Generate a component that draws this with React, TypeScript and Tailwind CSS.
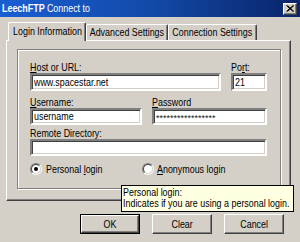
import React from 'react'

const sunken = "border-2 border-t-[#808080] border-l-[#808080] border-r-white border-b-white shadow-[inset_1px_1px_0_#404040,inset_-1px_-1px_0_#d4d0c8] bg-white"

// narrow text, like the old MS Sans Serif face
const T: React.FC<{ children: React.ReactNode; center?: boolean; className?: string }> = ({ children, center, className }) => (
    <span className={`inline-block whitespace-nowrap scale-x-[0.81] ${center ? "origin-center" : "origin-left"} ${className ?? ""}`}>{children}</span>
)

const Field: React.FC<{ value?: string; className?: string; small?: boolean }> = ({ value, className, small }) => (
    <div className={`${sunken} h-[17px] flex items-center pl-[2px] leading-none overflow-hidden ${className ?? ""}`}>
        {small ? <span className="text-[9px] mt-[3px] text-[#202020] whitespace-nowrap">{value}</span> : value ? <T>{value}</T> : null}
    </div>
)

const Label: React.FC<{ children: React.ReactNode; className?: string }> = ({ children, className }) => (
    <div className={`h-[12px] leading-[12px] whitespace-nowrap ${className ?? ""}`}><T>{children}</T></div>
)

const Radio: React.FC<{ checked?: boolean }> = ({ checked }) => (
    <div className="w-[12px] h-[12px] shrink-0 rounded-full border border-t-[#808080] border-l-[#808080] border-r-white border-b-white">
        <div className="w-full h-full rounded-full bg-white border border-t-[#404040] border-l-[#404040] border-r-[#d4d0c8] border-b-[#d4d0c8] flex items-center justify-center">
            {checked ? <div className="w-[4px] h-[4px] rounded-full bg-black" /> : null}
        </div>
    </div>
)

const Tab: React.FC<{ selected?: boolean; children: React.ReactNode; w: string }> = ({ selected, children, w }) => (
    <div
        className={
            selected
                ? `${w} h-[19px] -mb-px relative z-10 bg-[#d4d0c8] border-l border-t border-white border-r border-r-[#404040] shadow-[inset_-1px_0_0_#808080] rounded-tl-[2px] rounded-tr-[2px] flex items-center justify-center pb-[2px]`
                : `${w} h-[16px] bg-[#d4d0c8] border-t border-l border-white border-r border-r-[#404040] shadow-[inset_-1px_0_0_#808080] rounded-tl-[2px] rounded-tr-[2px] flex items-center justify-center`
        }
    >
        <T center className="leading-none">{children}</T>
    </div>
)

const Button: React.FC<{ children: React.ReactNode; def?: boolean }> = ({ children, def }) => (
    <div className={`w-[60px] h-[20px] ${def ? "border border-black" : ""}`}>
        <div className="w-full h-full border border-t-white border-l-white border-r-[#404040] border-b-[#404040] shadow-[inset_-1px_-1px_0_#808080] flex items-center justify-center leading-none">
            <T center>{children}</T>
        </div>
    </div>
)

export default function App() {
    return (
        <div className="w-[300px] h-[242px] bg-[#d4d0c8] overflow-hidden relative text-[11px] text-black font-['Liberation_Sans',Arial,sans-serif]">
            {/* title bar */}
            <div className="h-[17px] flex items-center pl-[2px] pr-[3px] bg-gradient-to-r from-[#1a5ed4] via-[#124aa8] to-[#0a246a]">
                <T className="text-white font-bold leading-none">LeechFTP <span className="font-normal">Connect to</span></T>
                <div className="ml-auto w-[14px] h-[12px] bg-[#d4d0c8] border border-t-white border-l-white border-r-[#404040] border-b-[#404040] shadow-[inset_-1px_-1px_0_#808080] flex items-center justify-center">
                    <svg width="8" height="7" viewBox="0 0 8 7">
                        <path d="M0.5 0.5 L7 6.5 M1.5 0.5 L8 6.5 M7 0.5 L0.5 6.5 M8 0.5 L1.5 6.5" stroke="black" strokeWidth="1" />
                    </svg>
                </div>
            </div>

            <div className="ml-[6px] mt-[5px]">
                {/* tabs */}
                <div className="flex items-end h-[18px] pl-[2px]">
                    <Tab selected w="w-[78px]">Login Information</Tab>
                    <Tab w="w-[82px]">Advanced Settings</Tab>
                    <Tab w="w-[89px]">Connection Settings</Tab>
                </div>

                {/* tab panel */}
                <div className="w-[285px] h-[161px] border border-t-white border-l-white border-r-[#404040] border-b-[#404040] shadow-[inset_-1px_-1px_0_#808080] pt-[8px] pl-[10px]">
                    <div className="w-[264px] h-[140px] border border-[#808080] shadow-[1px_1px_0_#fff,inset_1px_1px_0_#fff] pt-[11px] pl-[12px] pr-[12px]">
                        <div className="flex gap-[10px]">
                            <div className="w-[191px]">
                                <Label><span className="underline">H</span>ost or URL:</Label>
                                <Field value="www.spacestar.net" className="h-[18px]" />
                            </div>
                            <div className="w-[36px]">
                                <Label>Po<span className="underline">r</span>t:</Label>
                                <Field value="21" className="h-[18px]" />
                            </div>
                        </div>

                        <div className="flex gap-[10px] mt-[5px]">
                            <div className="w-[112px]">
                                <Label><span className="underline">U</span>sername:</Label>
                                <Field value="username" />
                            </div>
                            <div className="w-[115px]">
                                <Label><span className="underline">P</span>assword</Label>
                                <Field value="*****************" small />
                            </div>
                        </div>

                        <div className="mt-[2px]">
                            <Label>Remote Directory:</Label>
                            <Field className="w-[237px]" />
                        </div>

                        <div className="flex items-center h-[14px] mt-[6px]">
                            <div className="flex items-center w-[112px]">
                                <Radio checked />
                                <T className="ml-[4px] leading-none">Personal <span className="underline">l</span>ogin</T>
                            </div>
                            <div className="flex items-center">
                                <Radio />
                                <T className="ml-[3px] leading-none"><span className="underline">A</span>nonymous login</T>
                            </div>
                        </div>
                    </div>
                </div>

                {/* buttons */}
                <div className="flex gap-[12px] mt-[13px] ml-[74px]">
                    <Button def>OK</Button>
                    <Button>Clear</Button>
                    <Button>Cancel</Button>
                </div>
            </div>

            {/* tooltip */}
            <div className="absolute left-[121px] top-[185px] w-[173px] h-[27px] bg-[#ffffe1] border border-black px-[1px] pt-[1px] leading-[11px] z-20">
                <div><T>Personal login:</T></div>
                <div><T>Indicates if you are using a personal login.</T></div>
            </div>
        </div>
    )
}
